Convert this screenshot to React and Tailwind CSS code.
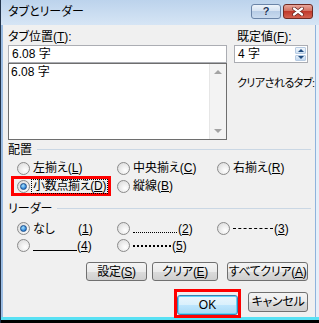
import React from 'react';

const font = "font-['Liberation_Sans','Noto_Sans_CJK_JP',sans-serif] [font-feature-settings:'palt']";

const Radio = ({ checked }) => (
  <span className="relative inline-block w-[13px] h-[13px] shrink-0 rounded-full border border-[#8a8a8a] bg-[radial-gradient(circle_at_65%_65%,#ffffff,#d6d6d6)]">
    {checked && (
      <span className="absolute left-[2px] top-[2px] w-[7px] h-[7px] rounded-full border border-[#1b4f8c] bg-[radial-gradient(circle_at_40%_35%,#a6e3ff,#2a7fd4_70%)]" />
    )}
  </span>
);

const Btn = ({ children, className = '' }) => (
  <button
    className={`h-[19px] rounded-[3px] border border-[#707070] bg-[linear-gradient(#f4f4f4,#ebebeb_50%,#dcdcdc_50%,#cfcfcf)] text-[12px] leading-none text-black whitespace-nowrap tracking-[-0.3px] px-0 ${className}`}
  >
    {children}
  </button>
);

const GroupHeader = ({ label }) => (
  <div className="flex items-center h-[15px] gap-[5px] pr-[4px]">
    <span className="text-[12px] leading-none">{label}</span>
    <div className="flex-1 h-px bg-[#cad7e4]" />
  </div>
);

const Opt = ({ checked, children }) => (
  <div className="flex items-center gap-[3px] h-full">
    <Radio checked={checked} />
    <span className="flex items-center text-[12px] leading-none whitespace-nowrap">{children}</span>
  </div>
);

const App = () => {
  return (
    <div className={`w-[319px] h-[323px] flex flex-col bg-[#cddff2] border-l border-[#22334a] text-black ${font}`}>
      {/* title bar */}
      <div className="h-[25px] flex items-start justify-between bg-[linear-gradient(#bcd3ec,#d6e5f5)] pl-[7px] pr-[6px]">
        <span className="pt-[5px] text-[12px] leading-[14px]">タブとリーダー</span>
        <div className="flex gap-[2px] pt-[4px]">
          <div className="w-[30px] h-[15px] rounded-[3px] border border-[#6a84a7] bg-[linear-gradient(#eef4fb,#d3e1f1_50%,#b8cde6_50%,#c9dbef)] flex items-center justify-center">
            <span className="text-[11px] font-bold leading-none text-[#1d3659] [text-shadow:0_0_1px_#fff]">?</span>
          </div>
          <div className="w-[30px] h-[15px] rounded-[3px] border border-[#6f2a22] bg-[linear-gradient(#e9a79a,#d06a5a_50%,#c0392b_50%,#d3614f)] flex items-center justify-center">
            <svg width="12" height="9" viewBox="0 0 12 9">
              <path d="M2 1.5 L10 7.5 M10 1.5 L2 7.5" stroke="#5a1c15" strokeWidth="3.6" strokeLinecap="round" />
              <path d="M2 1.5 L10 7.5 M10 1.5 L2 7.5" stroke="#ffffff" strokeWidth="2.2" strokeLinecap="round" />
            </svg>
          </div>
        </div>
      </div>

      {/* body */}
      <div className="flex h-[292px]">
        <div className="w-[2px] bg-[#9cbde3]" />
        <div className="w-[312px] bg-[#f0f0f0] flex flex-col pt-[5px]">
          {/* top section */}
          <div className="flex gap-[7px] pl-[5px]">
            <div className="w-[219px] flex flex-col">
              <div className="h-[15px] text-[12px] leading-[15px]">
                タブ位置(<u>T</u>):
              </div>
              <div className="h-[18px] border border-[#abadb3] bg-white text-[12px] leading-[16px] pl-[3px]">6.08 字</div>
              <div className="h-[77px] border border-[#6e6e6e] bg-white flex">
                <div className="flex-1 text-[12px] leading-[15px] pl-[2px] pt-[1px]">6.08 字</div>
                <div className="w-[17px] bg-[#f3f3f3] border-l border-[#e6e6e6] flex flex-col justify-between items-center py-[6px]">
                  <div className="w-0 h-0 border-l-[4px] border-r-[4px] border-b-[4px] border-l-transparent border-r-transparent border-b-[#a3a3a3]" />
                  <div className="w-0 h-0 border-l-[4px] border-r-[4px] border-t-[4px] border-l-transparent border-r-transparent border-t-[#a3a3a3]" />
                </div>
              </div>
            </div>
            <div className="flex flex-col">
              <div className="h-[15px] text-[12px] leading-[15px] pl-[3px]">
                既定値(<u>F</u>):
              </div>
              <div className="w-[74px] h-[18px] border border-[#abadb3] bg-white flex">
                <span className="flex-1 text-[12px] leading-[16px] pl-[3px]">4 字</span>
                <div className="w-[13px] flex flex-col gap-px p-px">
                  <div className="flex-1 rounded-[1px] bg-[linear-gradient(#f2f7fc,#cfe1f3)] border border-[#b7cbe2] flex items-center justify-center">
                    <div className="w-0 h-0 border-l-[3px] border-r-[3px] border-b-[3px] border-l-transparent border-r-transparent border-b-[#1f4b7e]" />
                  </div>
                  <div className="flex-1 rounded-[1px] bg-[linear-gradient(#e4eef9,#c3d8ef)] border border-[#b7cbe2] flex items-center justify-center">
                    <div className="w-0 h-0 border-l-[3px] border-r-[3px] border-t-[3px] border-l-transparent border-r-transparent border-t-[#1f4b7e]" />
                  </div>
                </div>
              </div>
              <div className="mt-[13px] h-[15px] text-[11px] leading-[15px] pl-[3px] whitespace-nowrap tracking-[-0.5px]">クリアされるタブ:</div>
            </div>
          </div>

          {/* alignment */}
          <div className="mt-[2px] pl-[5px]">
            <GroupHeader label="配置" />
          </div>
          <div className="mt-[2px] pl-[14px] grid grid-cols-[100px_100px_100px] grid-rows-[18px_18px]">
            <Opt>左揃え(<u>L</u>)</Opt>
            <Opt>中央揃え(<u>C</u>)</Opt>
            <Opt>右揃え(<u>R</u>)</Opt>
            <div className="relative">
              <div className="absolute -left-[6px] -top-[1px] w-[100px] h-[20px] border-[3px] border-[#ff0000]" />
              <div className="relative flex items-center gap-[2px] h-full">
                <Radio checked />
                <span className="text-[12px] leading-[13px] whitespace-nowrap outline-1 outline-dotted outline-black px-[1px] tracking-[-0.3px]">
                  小数点揃え(<u>D</u>)
                </span>
              </div>
            </div>
            <Opt>縦線(<u>B</u>)</Opt>
          </div>

          {/* leader */}
          <div className="mt-[6px] pl-[5px]">
            <GroupHeader label="リーダー" />
          </div>
          <div className="mt-[4px] pl-[14px] grid grid-cols-[100px_100px_100px] grid-rows-[17px_17px]">
            <Opt checked>
              <span className="inline-block w-[45px]">なし</span>(<u>1</u>)
            </Opt>
            <Opt>
              <span className="inline-block w-[44px] h-[9px] border-b border-dotted border-black mr-[1px]" />(<u>2</u>)
            </Opt>
            <Opt>
              <span className="inline-block w-[40px] h-0 border-t-[1.5px] border-dashed border-black mr-[1px]" />(<u>3</u>)
            </Opt>
            <Opt>
              <span className="inline-block w-[44px] h-[10px] border-b border-black" />(<u>4</u>)
            </Opt>
            <Opt>
              <span className="inline-block w-[38px] h-[2px] border-t-2 border-dotted border-black mr-[1px]" />(<u>5</u>)
            </Opt>
          </div>

          {/* buttons */}
          <div className="mt-[8px] flex justify-end pr-[7px]">
            <Btn className="w-[61px]">設定(<u>S</u>)</Btn>
            <Btn className="w-[66px] ml-[5px]">クリア(<u>E</u>)</Btn>
            <Btn className="w-[81px] ml-[9px]">すべてクリア(<u>A</u>)</Btn>
          </div>
          <div className="mt-[11px] flex justify-end pr-[7px]">
            <div className="relative">
              <div className="absolute -left-[3px] -top-[3px] -right-[3px] -bottom-[2px] border-[3px] border-[#ff0000]" />
              <button className="relative w-[61px] h-[20px] rounded-[3px] border border-[#3c7fb1] shadow-[inset_0_0_0_1px_#62d4f7] bg-[linear-gradient(#eaf6fd,#d9f0fc_50%,#bee6fd_50%,#a7d9f5)] text-[12px] leading-none">
                OK
              </button>
            </div>
            <Btn className="w-[60px] h-[20px] ml-[10px]">キャンセル</Btn>
          </div>
        </div>
        <div className="w-[4px] border-l border-[#8fb3dc] bg-[#e6eff9]" />
      </div>
      <div className="h-[3px] bg-[#58e1f4]" />
      <div className="h-[3px] bg-black" />
    </div>
  );
};

export default App;
